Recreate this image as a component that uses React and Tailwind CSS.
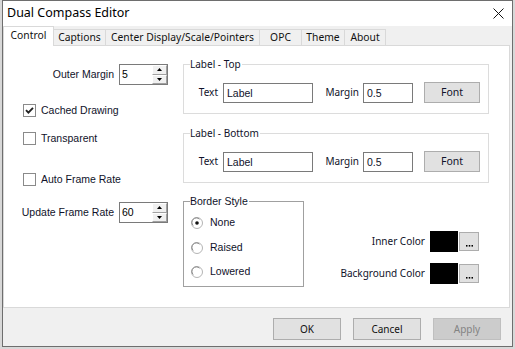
import React from 'react'

const ui = "font-['Noto_Sans',sans-serif]"
const classic = "font-['Liberation_Sans',Arial,sans-serif] text-[10.5px]"

function SpinBtn({ up }) {
  return (
    <div className="flex flex-1 items-center justify-center border border-b-[#a0a0a0] border-l-white border-r-[#a0a0a0] border-t-white bg-[#f0f0f0]">
      <svg width="5" height="3" viewBox="0 0 5 3">
        <path d={up ? 'M2.5 0 L5 3 L0 3 Z' : 'M0 0 L5 0 L2.5 3 Z'} fill="#000" />
      </svg>
    </div>
  )
}

function Spinner({ value }) {
  return (
    <div className="flex h-[21px] w-[49px] border border-[#7a7a7a] bg-white">
      <div className={`flex-1 pl-[2px] leading-[19px] ${classic}`}>{value}</div>
      <div className="flex w-[15px] flex-col">
        <SpinBtn up />
        <SpinBtn />
      </div>
    </div>
  )
}

function Check({ checked, label, className = '' }) {
  return (
    <div className={`flex h-[13px] items-center pl-[19px] ${className}`}>
      <div className="flex h-[13px] w-[13px] items-center justify-center border border-[#8a8a8a] bg-white">
        {checked && (
          <svg width="9" height="9" viewBox="0 0 9 9">
            <path d="M1 4.2 L3.4 6.6 L8 1.8" stroke="#222" strokeWidth="1.9" fill="none" />
          </svg>
        )}
      </div>
      <span className={`ml-[5px] leading-[13px] text-[#10122a] ${classic}`}>{label}</span>
    </div>
  )
}

function Radio({ checked, label, className = '' }) {
  return (
    <div className={`flex h-[13px] items-center pl-[7px] ${className}`}>
      <svg width="12" height="12" viewBox="0 0 12 12">
        <circle cx="6" cy="6" r="5.5" fill="#fff" stroke="#b4b4b4" />
        <path d="M2.2 8.5 A4.4 4.4 0 0 1 8.5 2.2" stroke="#8a8a8a" fill="none" />
        {checked && <circle cx="6" cy="6" r="1.8" fill="#111" />}
      </svg>
      <span className={`ml-[7px] leading-[13px] text-[#10122a] ${classic}`}>{label}</span>
    </div>
  )
}

function Group({ title, titleClass, className, children }) {
  return (
    <div className={`relative border ${className}`}>
      <span className={`absolute left-[6px] bg-white pr-[1px] leading-[14px] text-[#10122a] ${titleClass}`}>
        {title}
      </span>
      {children}
    </div>
  )
}

function LabelGroup({ title, className }) {
  return (
    <Group
      title={title}
      titleClass={`top-[-8px] text-[10px] ${ui}`}
      className={`h-[50px] w-[306px] border-[#dcdcdc] ${className}`}
    >
      <div className={`flex items-center pt-[17px] text-[10px] text-[#10122a] ${ui}`}>
        <span className="w-[34px] text-right">Text</span>
        <div className={`ml-[5px] h-[20px] w-[90px] border border-[#7a7a7a] pl-[3px] leading-[18px] ${classic}`}>
          Label
        </div>
        <span className="w-[46px] text-right">Margin</span>
        <div className={`ml-[4px] h-[20px] w-[50px] border border-[#7a7a7a] pl-[3px] leading-[18px] ${classic}`}>
          0.5
        </div>
        <button className="ml-[11px] h-[21px] w-[56px] border border-[#adadad] bg-[#e1e1e1] text-[10.5px]">
          Font
        </button>
      </div>
    </Group>
  )
}

function ColorRow({ label, className }) {
  return (
    <div className={`flex items-center justify-end ${className}`}>
      <span className={`text-[10px] text-[#10122a] ${ui}`}>{label}</span>
      <div className="ml-[5px] h-[21px] w-[28px] bg-black" />
      <button className="ml-[1px] flex h-[19px] w-[20px] items-end justify-center border border-[#adadad] bg-[#e1e1e1] pb-[3px]">
        <svg width="7" height="2" viewBox="0 0 7 2">
          <rect x="0" y="0" width="1.5" height="1.6" fill="#000" />
          <rect x="2.75" y="0" width="1.5" height="1.6" fill="#000" />
          <rect x="5.5" y="0" width="1.5" height="1.6" fill="#000" />
        </svg>
      </button>
    </div>
  )
}

const TABS = [
  ['Captions', 'w-[52px]'],
  ['Center Display/Scale/Pointers', 'w-[154px]'],
  ['OPC', 'w-[42px]'],
  ['Theme', 'w-[43px]'],
  ['About', 'w-[41px]'],
]

export default function App() {
  return (
    <div className="h-[349px] w-[515px] bg-[#d8d8d8]">
      <div className="ml-[2px] flex h-[347px] w-[511px] flex-col border border-[#6e6e6e] bg-[#f0f0f0]">
        {/* title bar */}
        <div className="flex h-[25px] items-center justify-between bg-white pl-[4px] pr-[8px]">
          <span className={`text-[12.5px] text-black ${ui}`}>Dual Compass Editor</span>
          <svg width="11" height="11" viewBox="0 0 11 11">
            <path d="M0.5 0.5 L10.5 10.5 M10.5 0.5 L0.5 10.5" stroke="#111" strokeWidth="1" />
          </svg>
        </div>

        {/* tabs */}
        <div className={`flex h-[19px] items-end text-[10.3px] text-[#111] ${ui}`}>
          <div className="relative z-10 mb-[-1px] flex h-[20px] w-[51px] items-start justify-center border-x border-t border-[#d9d9d9] bg-white pt-[1px]">
            Control
          </div>
          {TABS.map(([t, w]) => (
            <div
              key={t}
              className={`flex h-[16px] items-center justify-center border-r border-t border-[#d9d9d9] bg-[#f0f0f0] ${w}`}
            >
              {t}
            </div>
          ))}
        </div>

        {/* panel */}
        <div className="flex h-[263px] w-[507px] border border-[#d9d9d9] bg-white">
          <div className="w-[164px]">
            <div className="mt-[18px] flex items-center justify-end">
              <span className={`mr-[5px] text-[#10122a] ${classic}`}>Outer Margin</span>
              <Spinner value="5" />
            </div>
            <Check checked label="Cached Drawing" className="mt-[19px]" />
            <Check label="Transparent" className="mt-[15px]" />
            <Check label="Auto Frame Rate" className="mt-[28px]" />
            <div className="mt-[16px] flex items-center justify-end">
              <span className={`mr-[5px] text-[#10122a] ${classic}`}>Update Frame Rate</span>
              <Spinner value="60" />
            </div>
          </div>

          <div className="ml-[15px] w-[306px]">
            <LabelGroup title="Label - Top" className="mt-[18px]" />
            <LabelGroup title="Label - Bottom" className="mt-[19px]" />
            <div className="mt-[18px] flex">
              <Group
                title="Border Style"
                titleClass={`top-[-8px] ${classic}`}
                className="h-[86px] w-[121px] border-[#a0a0a0]"
              >
                <Radio checked label="None" className="mt-[14px]" />
                <Radio label="Raised" className="mt-[12px]" />
                <Radio label="Lowered" className="mt-[11px]" />
              </Group>
              <div className="ml-auto mr-[10px]">
                <ColorRow label="Inner Color" className="mt-[30px]" />
                <ColorRow label="Background Color" className="mt-[11px]" />
              </div>
            </div>
          </div>
        </div>

        {/* buttons */}
        <div className={`flex justify-end gap-[12px] pr-[11px] pt-[10px] text-[10px] ${ui}`}>
          <button className="h-[22px] w-[68px] border border-[#adadad] bg-[#e1e1e1] text-[#111]">OK</button>
          <button className="h-[22px] w-[68px] border border-[#adadad] bg-[#e1e1e1] text-[#111]">Cancel</button>
          <button className="h-[22px] w-[68px] border border-[#bfbfbf] bg-[#cccccc] text-[#838383]">Apply</button>
        </div>
      </div>
    </div>
  )
}
